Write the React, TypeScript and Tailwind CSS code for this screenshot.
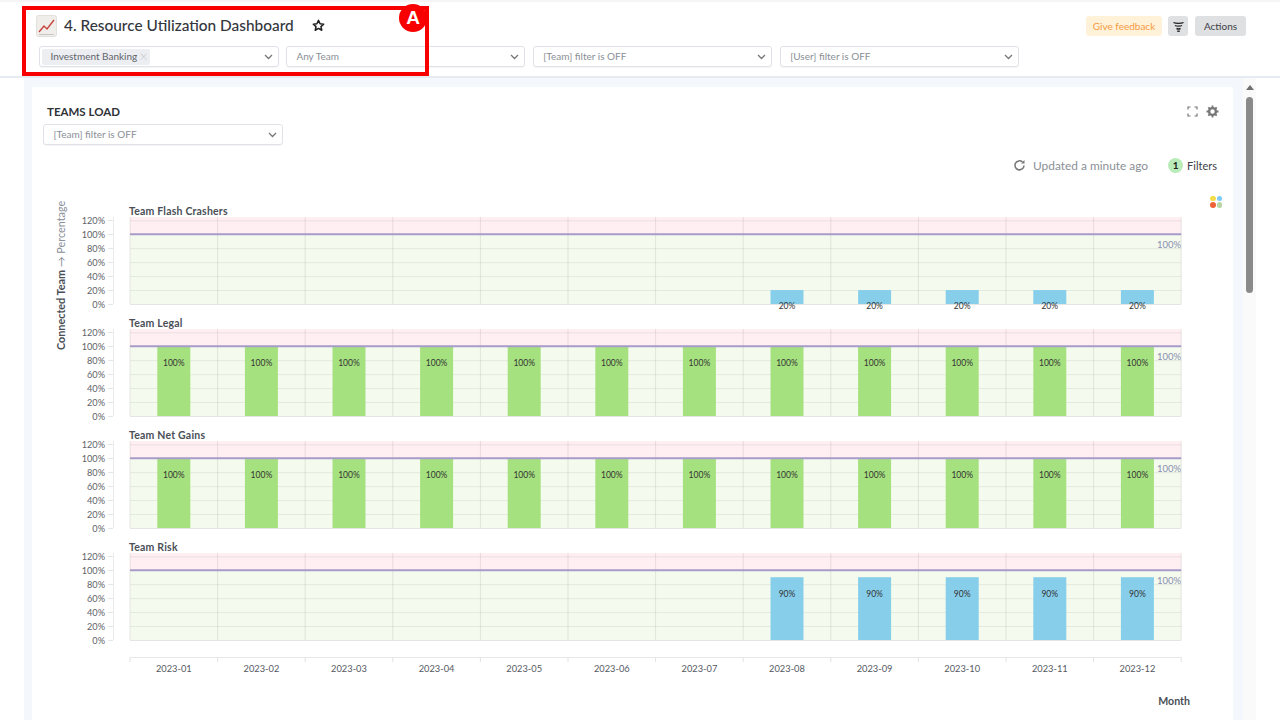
import React from "react";

const FONT = { fontFamily: "Lato, 'Open Sans', sans-serif" };

function Chevron() {
  return (
    <svg width="9" height="6" viewBox="0 0 9 6" className="shrink-0">
      <path d="M1 1l3.500 3.500L8 1" fill="none" stroke="#777" strokeWidth="1.300" />
    </svg>
  );
}

function Select({ label, children }: { label?: string; children?: React.ReactNode }) {
  return (
    <div className="flex h-[21px] w-[239.5px] shrink-0 items-center justify-between rounded-[3px] border border-[#dfe3e8] bg-white pr-[5px] shadow-[0_1px_1px_rgba(0,0,0,0.04)]">
      {children ?? <span className="pl-[9.5px] text-[10px] text-[#8a8f96]">{label}</span>}
      <Chevron />
    </div>
  );
}

const MONTHS = ["01", "02", "03", "04", "05", "06", "07", "08", "09", "10", "11", "12"];
const X0 = 98;
const CW = 87.6;
const BLUE = "#87ceeb";
const GREEN = "#a6e17f";

const PANELS: { title: string; value: number; from: number }[] = [
  { title: "Team Flash Crashers", value: 20, from: 7 },
  { title: "Team Legal", value: 100, from: 0 },
  { title: "Team Net Gains", value: 100, from: 0 },
  { title: "Team Risk", value: 90, from: 7 },
];

function Panel({ p, i }: { p: (typeof PANELS)[number]; i: number }) {
  const base = 109 + i * 112;
  const y = (v: number) => base - v * 0.6975;
  const bars = MONTHS.map((_, m) => m).filter((m) => m >= p.from);
  const color = p.value === 100 ? GREEN : BLUE;
  return (
    <g>
      <text x={X0 - 1} y={base - 89} fontSize="10.5" fontWeight="700" fill="#4a4f57" letterSpacing="0.2">
        {p.title}
      </text>
      <rect x={X0} y={base - 87} width={CW * 12} height={87 - 69.75} fill="#ffeff2" />
      <rect x={X0} y={y(100)} width={CW * 12} height={69.75} fill="#f4fbee" />
      {[20, 40, 60, 80, 120].map((v) => (
        <line key={v} x1={X0} x2={X0 + CW * 12} y1={y(v) + 0.5} y2={y(v) + 0.5} stroke="#000" strokeOpacity="0.07" />
      ))}
      {Array.from({ length: 13 }, (_, k) => (
        <line key={k} x1={X0 + k * CW} x2={X0 + k * CW} y1={base - 87} y2={base} stroke="#000" strokeOpacity="0.09" />
      ))}
      <line x1={X0} x2={X0 + CW * 12} y1={base + 0.5} y2={base + 0.5} stroke="#e3e6e3" />
      {[0, 20, 40, 60, 80, 100, 120].map((v) => (
        <g key={v}>
          <text x={73} y={y(v) + 3.5} fontSize="9.2" textAnchor="end" fill="#5f6368">
            {v}%
          </text>
          <line x1={76} x2={81} y1={Math.round(y(v)) + 0.5} y2={Math.round(y(v)) + 0.5} stroke="#e4e6e8" />
        </g>
      ))}
      <line x1={81.5} x2={81.5} y1={base - 87} y2={base} stroke="#e9ebed" />
      {bars.map((m) => {
        const cx = X0 + CW * (m + 0.5);
        const top = y(p.value);
        const labelY = p.value === 20 ? base + 4.5 : p.value === 100 ? base - 50 : base - 43;
        return (
          <g key={m}>
            <rect x={cx - 16.5} y={top} width={33} height={base - top} fill={color} />
            <text x={cx} y={labelY} fontSize="8.5" textAnchor="middle" fill="#333">
              {p.value}%
            </text>
          </g>
        );
      })}
      <line x1={X0} x2={X0 + CW * 12} y1={y(100)} y2={y(100)} stroke="#a79cc9" strokeWidth="2" />
      <text x={X0 + CW * 12} y={base - 56} fontSize="9.5" textAnchor="end" fill="#8b8fb0">
        100%
      </text>
    </g>
  );
}

function TeamsChart() {
  return (
    <svg width="1201" height="530" viewBox="0 0 1201 530" className="block" style={FONT}>
      <text transform="translate(33 155) rotate(-90)" fontSize="10.8">
        <tspan fontWeight="700" fill="#4a4f57">Connected Team</tspan>
        <tspan fill="#8a9099"> → Percentage</tspan>
      </text>
      {PANELS.map((p, i) => (
        <Panel key={p.title} p={p} i={i} />
      ))}
      <line x1={X0} x2={X0 + CW * 12} y1={462.5} y2={462.5} stroke="#e6e7e9" />
      {Array.from({ length: 13 }, (_, k) => (
        <line key={k} x1={X0 + k * CW} x2={X0 + k * CW} y1={462} y2={467} stroke="#e0e2e4" />
      ))}
      {MONTHS.map((m, k) => (
        <text key={m} x={X0 + CW * (k + 0.5)} y={477} fontSize="9.3" textAnchor="middle" fill="#55595f">
          2023-{m}
        </text>
      ))}
      <text x={1158} y={510} fontSize="10.6" fontWeight="700" textAnchor="end" fill="#4a4f57">
        Month
      </text>
    </svg>
  );
}

export default function App() {
  return (
    <div className="relative flex h-[720px] w-[1280px] flex-col overflow-hidden bg-white" style={FONT}>
      <div className="h-[2px] shrink-0 bg-[#f5f5f6]" />

      {/* Header */}
      <header className="flex h-[76px] shrink-0 items-start justify-between border-b-2 border-[#e6ebf2] bg-white pl-[39px] pr-[34px]">
        <div className="flex flex-col">
          <div className="flex h-[44px] items-center">
            <svg width="21" height="22" viewBox="0 0 21 22" className="-ml-[3px] mt-[3px] shrink-0">
              <rect x="0.5" y="0.5" width="20" height="21" rx="2" fill="#efeeeb" stroke="#e2e0dc" />
              <path d="M3 17l5-6 3 3 7-9" fill="none" stroke="#c9443f" strokeWidth="1.400" />
              <path d="M3 19.500h15" stroke="#c8c6c2" strokeWidth="1" />
            </svg>
            <h1 className="ml-[7px] mt-[4px] text-[15.4px] font-medium text-[#33373d]">
              4. Resource Utilization Dashboard
            </h1>
            <svg width="13" height="13" viewBox="0 0 24 24" className="ml-[18px] mt-[3px]">
              <path d="M12 2.500l2.900 6.200 6.700.8-5 4.600 1.400 6.700L12 17.400l-6 3.400 1.400-6.700-5-4.600 6.700-.8z" fill="none" stroke="#222" strokeWidth="2.800" strokeLinejoin="round" />
            </svg>
          </div>
          <div className="flex gap-[7.4px]">
            <Select>
              <span className="ml-[2px] flex h-[16px] items-center gap-[2px] rounded-[2px] bg-[#eceef1] pl-[8.5px] pr-[2px] text-[10px] text-[#5f646b]">
                Investment Banking
                <span className="text-[15px] font-light leading-none text-[#c3c6cb]">×</span>
              </span>
            </Select>
            <Select label="Any Team" />
            <Select label="[Team] filter is OFF" />
            <Select label="[User] filter is OFF" />
          </div>
        </div>
        <div className="mt-[14px] flex items-center gap-[6px]">
          <div className="flex h-[20px] w-[76px] items-center justify-center rounded-[3px] bg-[#fff2d9] text-[10px] text-[#f79a45]">
            Give feedback
          </div>
          <div className="flex h-[20px] w-[20px] items-center justify-center rounded-[3px] bg-[#dfe0e2]">
            <svg width="13" height="13" viewBox="0 0 13 13">
              <path d="M1.500 2.500c2 1.200 8 1.200 10 0M3 5.500c1.500.8 5.500.8 7 0M4.500 8.500c1 .5 3 .5 4 0" fill="none" stroke="#222" strokeWidth="1.400" />
              <path d="M5.200 11.200h2.600" stroke="#222" strokeWidth="1.400" />
            </svg>
          </div>
          <div className="ml-px flex h-[20px] w-[51px] items-center justify-center rounded-[3px] bg-[#dfe0e2] text-[10px] text-[#3d4147]">
            Actions
          </div>
        </div>
      </header>

      {/* Body */}
      <div className="flex min-h-0 flex-1">
        <div className="w-[24px] shrink-0 bg-white" />
        <main className="min-w-0 flex-1 bg-[#f4f7fb] pl-[8px] pr-[10px] pt-[9px]">
          <section className="h-[700px] rounded-t-[2px] bg-white">
            <div className="flex items-start justify-between pl-[15px] pr-[14px] pt-[18px]">
              <h2 className="text-[11.5px] font-bold leading-[14px] text-[#2f3338]">TEAMS LOAD</h2>
              <div className="flex items-center gap-[8px]">
                <svg width="11" height="11" viewBox="0 0 11 11">
                  <path d="M1 3.500V1h2.500M7.500 1H10v2.500M10 7.500V10H7.500M3.500 10H1V7.500" fill="none" stroke="#777" strokeWidth="1.200" />
                </svg>
                <svg width="13" height="13" viewBox="0 0 13 13">
                  <circle cx="6.500" cy="6.500" r="3.400" fill="none" stroke="#777" strokeWidth="2.400" />
                  <path d="M6.500 0.500v2.500M6.500 10v2.500M0.500 6.500h2.500M10 6.500h2.500M2.300 2.300l1.700 1.700M9 9l1.700 1.700M2.300 10.700L4 9M9 4l1.700-1.700" stroke="#777" strokeWidth="1.800" />
                </svg>
              </div>
            </div>
            <div className="ml-[11px] mt-[5px]">
              <Select label="[Team] filter is OFF" />
            </div>
            <div className="mt-[12px] flex items-center justify-end pr-[16px]">
              <svg width="13" height="13" viewBox="0 0 13 13" className="mr-[7px]">
                <path d="M11 6.500A4.500 4.500 0 1 1 9.500 3" fill="none" stroke="#777" strokeWidth="1.500" />
                <path d="M11.500 1v3.500H8z" fill="#777" />
              </svg>
              <span className="text-[11.9px] text-[#8a8f96]">Updated a minute ago</span>
              <span className="ml-[20px] flex h-[15px] w-[15px] items-center justify-center rounded-full bg-[#b9ecb9] text-[10px] font-bold text-[#222]">
                1
              </span>
              <span className="ml-[4px] text-[11px] text-[#3d4147]">Filters</span>
            </div>
            <div className="relative mt-[20px]">
              <TeamsChart />
              <div className="absolute right-[11px] top-px grid grid-cols-2 gap-[1px]">
                <span className="h-[5.500px] w-[5.500px] rounded-full bg-[#f4dd4a]" />
                <span className="h-[5.500px] w-[5.500px] rounded-full bg-[#7cc8f8]" />
                <span className="h-[5.500px] w-[5.500px] rounded-full bg-[#f0623a]" />
                <span className="h-[5.500px] w-[5.500px] rounded-full bg-[#b6d6a4]" />
              </div>
            </div>
          </section>
        </main>
        <div className="relative flex w-[13px] shrink-0 flex-col items-center bg-[#fafafa]">
          <svg width="8" height="5" viewBox="0 0 8 5" className="mt-[7px]">
            <path d="M4 0l4 5H0z" fill="#707070" />
          </svg>
          <div className="mt-[7px] h-[196px] w-[7px] rounded-full bg-[#8a8a8a]" />
        </div>
        <div className="w-[24px] shrink-0 bg-white" />
      </div>

      {/* Annotation callout */}
      <div className="absolute left-[22px] top-[6px] h-[70px] w-[407px] border-[4px] border-[#f80000]" />
      <div className="absolute left-[399px] top-[4px] flex h-[28px] w-[28px] items-center justify-center rounded-full bg-[#f80000] text-[19px] font-bold text-white" style={{ fontFamily: "'Liberation Sans', sans-serif" }}>
        A
      </div>
    </div>
  );
}
